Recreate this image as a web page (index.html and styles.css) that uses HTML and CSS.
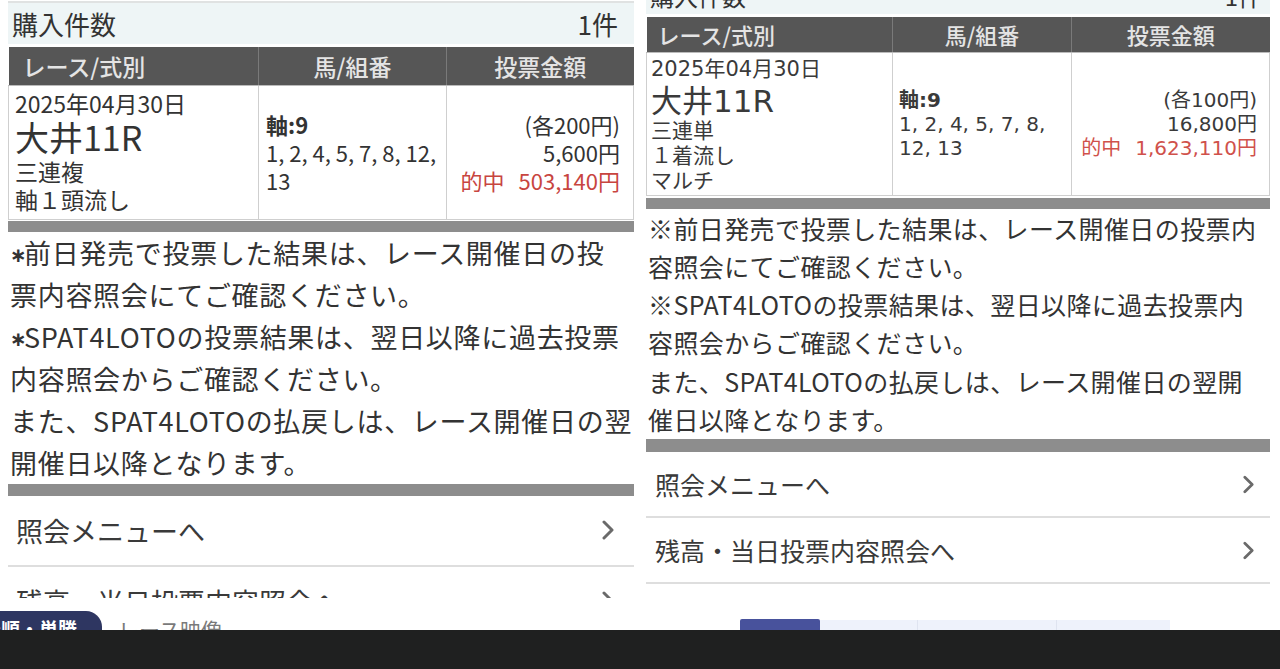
FILE: index.html
```html
<!DOCTYPE html>
<html lang="ja">
<head>
<meta charset="utf-8">
<title>投票結果</title>
<link rel="stylesheet" href="styles.css">
</head>
<body>
<div class="stage">
  <div class="panels">
    <section class="phone phone-a">
      <div class="screen">
        <div class="count-row"><span>購入件数</span><span>1件</span></div>
        <table class="bet">
          <colgroup><col class="c1"><col class="c2"><col class="c3"></colgroup>
          <thead>
            <tr><th class="left">レース/式別</th><th>馬/組番</th><th>投票金額</th></tr>
          </thead>
          <tbody>
            <tr>
              <td class="race">
                <div class="date">2025年04月30日</div>
                <div class="venue">大井11R</div>
                <div class="line">三連複</div>
                <div class="line">軸１頭流し</div>
              </td>
              <td class="horses">
                <div class="axis">軸:9</div>
                <div>1, 2, 4, 5, 7, 8, 12,</div>
                <div>13</div>
              </td>
              <td class="amount">
                <div>(各200円)</div>
                <div>5,600円</div>
                <div class="hit">的中<span class="gap"></span>503,140円</div>
              </td>
            </tr>
          </tbody>
        </table>
        <div class="bar"></div>
        <p class="notes"><span class="ast">∗</span>前日発売で投票した結果は、レース開催日の投<br>票内容照会にてご確認ください。<br><span class="ast">∗</span>SPAT4LOTOの投票結果は、翌日以降に過去投票<br>内容照会からご確認ください。<br>また、SPAT4LOTOの払戻しは、レース開催日の翌<br>開催日以降となります。</p>
        <div class="bar bar-b"></div>
        <ul class="menu">
          <li><span>照会メニューへ</span><svg class="chev" viewBox="0 0 12 20" width="12" height="20"><polyline points="2,2 10,10 2,18" fill="none" stroke="#6a6a6a" stroke-width="3" stroke-linecap="round" stroke-linejoin="round"/></svg></li>
          <li><span>残高・当日投票内容照会へ</span><svg class="chev" viewBox="0 0 12 20" width="12" height="20"><polyline points="2,2 10,10 2,18" fill="none" stroke="#6a6a6a" stroke-width="3" stroke-linecap="round" stroke-linejoin="round"/></svg></li>
        </ul>
      </div>
      <div class="navbar">
        <div class="pill">着順・単勝</div>
        <div class="nav-label">レース映像</div>
      </div>
    </section>

    <section class="phone phone-b">
      <div class="screen">
        <div class="count-row"><span>購入件数</span><span>1件</span></div>
        <table class="bet">
          <colgroup><col class="c1"><col class="c2"><col class="c3"></colgroup>
          <thead>
            <tr><th class="left">レース/式別</th><th>馬/組番</th><th>投票金額</th></tr>
          </thead>
          <tbody>
            <tr>
              <td class="race">
                <div class="date">2025年04月30日</div>
                <div class="venue">大井11R</div>
                <div class="line">三連単</div>
                <div class="line">１着流し</div>
                <div class="line">マルチ</div>
              </td>
              <td class="horses">
                <div class="axis">軸:9</div>
                <div>1, 2, 4, 5, 7, 8,</div>
                <div>12, 13</div>
              </td>
              <td class="amount">
                <div>(各100円)</div>
                <div>16,800円</div>
                <div class="hit">的中<span class="gap"></span>1,623,110円</div>
              </td>
            </tr>
          </tbody>
        </table>
        <div class="bar"></div>
        <p class="notes">※前日発売で投票した結果は、レース開催日の投票内<br>容照会にてご確認ください。<br>※SPAT4LOTOの投票結果は、翌日以降に過去投票内<br>容照会からご確認ください。<br>また、SPAT4LOTOの払戻しは、レース開催日の翌開<br>催日以降となります。</p>
        <div class="bar bar-b"></div>
        <ul class="menu">
          <li><span>照会メニューへ</span><svg class="chev" viewBox="0 0 12 20" width="11" height="19"><polyline points="2,2 10,10 2,18" fill="none" stroke="#6a6a6a" stroke-width="3" stroke-linecap="round" stroke-linejoin="round"/></svg></li>
          <li><span>残高・当日投票内容照会へ</span><svg class="chev" viewBox="0 0 12 20" width="11" height="19"><polyline points="2,2 10,10 2,18" fill="none" stroke="#6a6a6a" stroke-width="3" stroke-linecap="round" stroke-linejoin="round"/></svg></li>
        </ul>
      </div>
      <div class="tabs">
        <div class="tab tab-on"></div>
        <div class="tab t2"></div>
        <div class="tab t3"></div>
        <div class="tab t4"></div>
      </div>
    </section>
  </div>
  <div class="bottom-band"></div>
</div>
</body>
</html>
```

FILE: styles.css
```css
* { box-sizing: border-box; }
html, body { margin: 0; padding: 0; }
body {
  width: 1280px;
  height: 669px;
  overflow: hidden;
  background: #fff;
  font-family: "Noto Sans CJK JP", "Noto Sans", sans-serif;
  color: #333;
}
.stage { width: 1280px; height: 669px; display: flex; flex-direction: column; }
.panels { display: flex; height: 630px; }
.bottom-band { height: 39px; background: #1f2020; }

.phone { width: 640px; height: 630px; overflow: hidden; position: relative; background: #fff; }

/* ---------- shared pieces ---------- */
.count-row {
  display: flex;
  justify-content: space-between;
  align-items: center;
  background: #eef5f6;
  border-top: 2px solid #e0e2e2;
  color: #333;
}
.bet { border-collapse: collapse; table-layout: fixed; width: 100%; }
.bet th {
  background: #565656;
  color: #e4e4e4;
  font-weight: 500;
  text-align: center;
  padding: 0;
  border-left: 1px solid #7a7a7a;
  border-bottom: 1px solid #bbb;
}
.bet th:first-child { border-left: none; }
.bet th.left { text-align: left; }
.bet td {
  border: 1px solid #cfcfcf;
  vertical-align: middle;
  padding: 0;
  background: #fff;
}
.bet td.race { vertical-align: top; }
.bet .axis { font-weight: 700; }
.bet td.amount { text-align: right; }
.bet .hit { color: #c8453f; }
.gap { display: inline-block; width: 14px; }
.bar { background: #8d8d8d; }
.notes { margin: 0; color: #333; white-space: nowrap; }
.ast {
  display: inline-block;
  vertical-align: top;
  width: 14px;
  height: 42px;
  line-height: 46px;
  font-family: "DejaVu Sans", sans-serif;
  font-weight: 700;
  font-size: 20px;
  text-align: left;
}
.menu { list-style: none; margin: 0; padding: 0; }
.menu li {
  display: flex;
  align-items: center;
  justify-content: space-between;
  border-bottom: 2px solid #dedede;
  color: #3a3a3a;
}

/* ---------- left phone ---------- */
.phone-a .screen { padding: 1px 6px 0 8px; }
.phone-a .count-row { height: 43px; font-size: 26px; padding: 0 16px 0 4px; margin-bottom: 3px; }
.phone-a .c1 { width: 250px; }
.phone-a .c2 { width: 188px; }
.phone-a .bet th { height: 38px; font-size: 23px; }
.phone-a .bet th.left { padding-left: 14px; }
.phone-a .bet td { height: 134px; font-size: 22px; line-height: 28px; }
.phone-a .bet td.race { padding: 3px 0 0 6px; font-size: 23px; }
.phone-a .date { line-height: 28px; }
.phone-a .venue { font-size: 34px; line-height: 40px; }
.phone-a .line { line-height: 28px; }
.phone-a .bet td.horses { padding-left: 7px; }
.phone-a .bet td.amount { padding-right: 13px; }
.phone-a .bar { height: 11px; margin-top: 1px; }
.phone-a .bar-b { height: 12px; margin-top: 0; }
.phone-a .notes { font-size: 27px; line-height: 42px; letter-spacing: 0.7px; padding-left: 2px; height: 252px; }
.phone-a .menu li { height: 71px; font-size: 27px; padding: 0 20px 0 8px; }

.navbar {
  position: absolute;
  left: 0;
  top: 598px;
  width: 640px;
  height: 40px;
  background: #fff;
}
.pill {
  position: absolute;
  left: -30px;
  top: 13px;
  width: 132px;
  height: 30px;
  padding-left: 12px;
  background: #2e3661;
  color: #fff;
  font-weight: 700;
  font-size: 19px;
  line-height: 36px;
  border-radius: 0 16px 0 0;
  white-space: nowrap;
  overflow: hidden;
}
.nav-label {
  position: absolute;
  left: 118px;
  top: 16px;
  font-size: 21px;
  color: #7a7a7a;
  white-space: nowrap;
}

/* ---------- right phone ---------- */
.phone-b .screen { padding: 0 10px 0 6px; margin-top: -26px; }
.phone-b .count-row { height: 40px; font-size: 24px; padding: 0 8px 0 4px; margin-bottom: 3px; }
.phone-b .c1 { width: 246px; }
.phone-b .c2 { width: 179px; }
.phone-b .bet th { height: 35px; font-size: 22px; }
.phone-b .bet th.left { padding-left: 11px; }
.phone-b .bet td { height: 143px; font-family: "DejaVu Sans", "Noto Sans CJK JP", sans-serif; font-size: 20px; line-height: 24px; color: #3a3a3a; }
.phone-b .bet td.race { padding: 2px 0 0 4px; font-size: 21px; }
.phone-b .date { line-height: 28px; }
.phone-b .venue { font-size: 31px; line-height: 36px; }
.phone-b .line { line-height: 25px; }
.phone-b .bet td.horses { padding-left: 6px; }
.phone-b .bet td.amount { padding-right: 12px; }
.phone-b .bet .hit { color: #d0514b; }
.phone-b .bar { height: 11px; margin-top: 2px; }
.phone-b .bar-b { height: 13px; margin-top: 1px; }
.phone-b .notes { font-size: 25px; line-height: 38.3px; letter-spacing: 0.4px; padding-left: 2px; }
.phone-b .menu li { height: 66px; font-size: 25px; padding: 0 16px 0 9px; }

.tabs {
  position: absolute;
  top: 619px;
  left: 100px;
  display: flex;
  height: 20px;
}
.tab { height: 20px; background: #eef2fb; border-left: 1px solid #dfe4f0; margin-top: 1px; }
.tab-on { width: 80px; background: #48529c; border-left: none; margin-top: 0; border-radius: 2px 2px 0 0; }
.t2 { width: 97px; border-left: none; }
.t3 { width: 139px; }
.t4 { width: 114px; }
```
